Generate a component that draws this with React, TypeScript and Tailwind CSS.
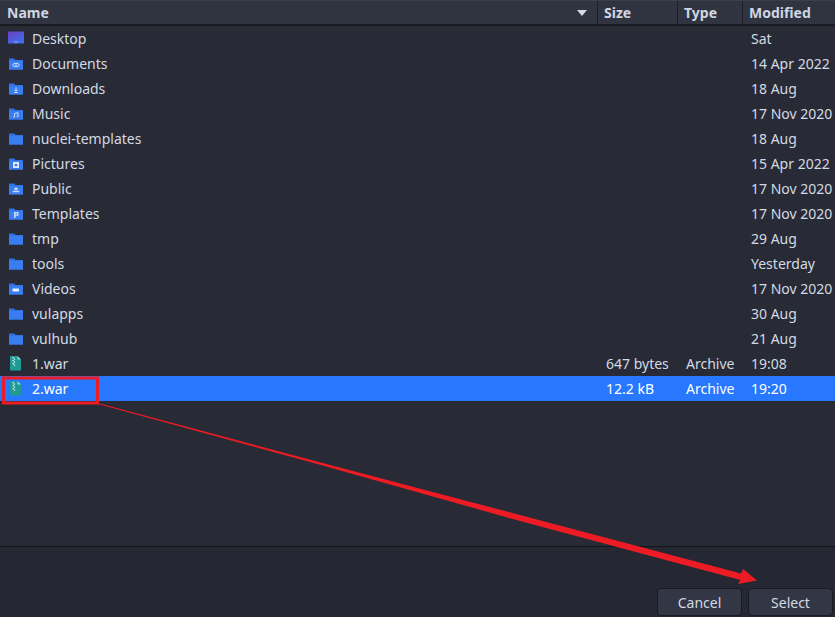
import React from "react";

type Row = { name: string; icon: string; size?: string; type?: string; mod: string; sel?: boolean };

const rows: Row[] = [
  { name: "Desktop", icon: "desktop", mod: "Sat" },
  { name: "Documents", icon: "doc", mod: "14 Apr 2022" },
  { name: "Downloads", icon: "down", mod: "18 Aug" },
  { name: "Music", icon: "music", mod: "17 Nov 2020" },
  { name: "nuclei-templates", icon: "plain", mod: "18 Aug" },
  { name: "Pictures", icon: "pic", mod: "15 Apr 2022" },
  { name: "Public", icon: "pub", mod: "17 Nov 2020" },
  { name: "Templates", icon: "tpl", mod: "17 Nov 2020" },
  { name: "tmp", icon: "plain", mod: "29 Aug" },
  { name: "tools", icon: "plain", mod: "Yesterday" },
  { name: "Videos", icon: "vid", mod: "17 Nov 2020" },
  { name: "vulapps", icon: "plain", mod: "30 Aug" },
  { name: "vulhub", icon: "plain", mod: "21 Aug" },
  { name: "1.war", icon: "zip", size: "647 bytes", type: "Archive", mod: "19:08" },
  { name: "2.war", icon: "zip", size: "12.2 kB", type: "Archive", mod: "19:20", sel: true },
];

function Glyph({ kind }: { kind: string }) {
  const c = "#c9dcff";
  switch (kind) {
    case "doc":
      return (
        <>
          <ellipse cx="8" cy="9" rx="3.2" ry="1.7" fill="none" stroke={c} strokeWidth="1" />
          <circle cx="8" cy="9" r="0.8" fill={c} />
        </>
      );
    case "down":
      return <path d="M8 6.5v3.5M6.3 8.7L8 10.4l1.7-1.7M6 11.5h4" fill="none" stroke={c} strokeWidth="1" />;
    case "music":
      return <path d="M6.5 11V7.5l3.5-.8V10.5M6.5 11h-1.2M10 10.5H8.8" fill="none" stroke={c} strokeWidth="1" />;
    case "pic":
      return (
        <>
          <rect x="5" y="6" width="6" height="6" fill="#dbe7ff" />
          <rect x="6.8" y="8" width="2.4" height="2.2" fill="#3a74e0" />
        </>
      );
    case "pub":
      return <path d="M6.5 6.8h3v2.2h-3zM4.8 9.8h6.4v1.4H4.8z" fill={c} />;
    case "tpl":
      return <path d="M6 6h4.5v3.8H7.5V12H6zM7.5 7.2v1.4H9V7.2z" fill={c} fillRule="evenodd" />;
    case "vid":
      return <rect x="4.5" y="7.5" width="6.5" height="3" rx="0.7" fill="#e6eeff" />;
    default:
      return null;
  }
}

function FileIcon({ kind }: { kind: string }) {
  if (kind === "desktop") {
    return (
      <svg width="16" height="16" viewBox="0 0 16 16" className="shrink-0">
        <defs>
          <linearGradient id="dg" x1="0" y1="0" x2="0.6" y2="1">
            <stop offset="0" stopColor="#6b3fbf" />
            <stop offset="1" stopColor="#3f6fea" />
          </linearGradient>
        </defs>
        <rect x="0" y="0.5" width="16" height="12" fill="url(#dg)" rx="0.5" />
        <rect x="6.5" y="10.5" width="1" height="1" fill="#d8e0ff" />
        <rect x="8.5" y="10.5" width="1" height="1" fill="#d8e0ff" />
      </svg>
    );
  }
  if (kind === "zip") {
    return (
      <svg width="16" height="16" viewBox="0 0 16 16" className="shrink-0">
        <path d="M2 0h7.5L13 3.5V14.5H2z" fill="#1f9a94" />
        <path d="M9.5 0L13 3.5H9.5z" fill="#8fdcd3" />
        <path d="M4.5 1h1.3v1.3H4.5zM5.8 2.5h1.3v1.3H5.8zM4.5 4h1.3v1.3H4.5zM5.8 5.5h1.3v1.3H5.8zM4.5 7h1.3v1.3H4.5zM5.8 8.5h1.3v1.3H5.8z" fill="#e2f7f3" />
      </svg>
    );
  }
  return (
    <svg width="16" height="16" viewBox="0 0 16 16" className="shrink-0">
      <path d="M1 2.5h5.2l1.3 1.5H15v9.5H1z" fill="#2f73e6" />
      <path d="M1 5h14v8.5H1z" fill="#3a7df0" />
      <Glyph kind={kind} />
    </svg>
  );
}

function Head({ label, className }: { label: string; className: string }) {
  return (
    <div className={`flex items-center px-[6px] h-full border-r border-[#1c1e26] font-bold text-[#cfd6e1] ${className}`}>
      {label}
    </div>
  );
}

export default function App() {
  return (
    <div
      className="relative w-[835px] h-[617px] overflow-hidden flex flex-col bg-[#282a36] text-[14px] text-[#d3dae3]"
      style={{ fontFamily: '"Noto Sans", "Open Sans", sans-serif' }}
    >
      <div className="h-[26px] flex shrink-0 bg-[#303340] border-b-2 border-[#191b22] border-t border-t-[#3a3d4a]">
        <div className="w-[598px] flex items-center justify-between pl-[7px] pr-[10px] h-full border-r border-[#1c1e26] font-bold text-[#cfd6e1]">
          <span>Name</span>
          <svg width="10" height="6" viewBox="0 0 10 6" className="mt-px">
            <path d="M0 0h10L5 6z" fill="#d3dae3" />
          </svg>
        </div>
        <Head label="Size" className="w-[80px]" />
        <Head label="Type" className="w-[65px]" />
        <Head label="Modified" className="flex-1 border-r-0" />
      </div>

      <div className="flex-1 flex flex-col">
        {rows.map((r) => (
          <div key={r.name} className={`h-[25px] flex items-center shrink-0 ${r.sel ? "bg-[#2777ff] text-white" : ""}`}>
            <div className="w-[598px] flex items-center pl-[8px] gap-[8px]">
              <FileIcon kind={r.icon} />
              <span>{r.name}</span>
            </div>
            <div className="w-[80px] pl-[8px]">{r.size}</div>
            <div className="w-[65px] pl-[8px]">{r.type}</div>
            <div className="flex-1 pl-[8px] whitespace-nowrap">{r.mod}</div>
          </div>
        ))}
      </div>

      <div className="h-[71px] shrink-0 bg-[#252833] border-t border-[#14151b] flex items-end justify-end gap-[6px] pr-[2px] pb-px">
        <button className="w-[85px] h-[28px] rounded-[4px] border border-[#191b22] bg-[#333644] text-[#d3dae3]">Cancel</button>
        <button className="w-[85px] h-[28px] rounded-[4px] border border-[#191b22] bg-[#333644] text-[#d3dae3]">Select</button>
      </div>

      <svg className="absolute inset-0 pointer-events-none" width="835" height="617" viewBox="0 0 835 617">
        <rect x="3.5" y="378" width="94" height="25" fill="none" stroke="#ed1c24" strokeWidth="3" />
        <path d="M98 403 L300 457 L520 515 L741 573.5 L743 569 L757 580.5 L738 584 L740.5 580 L520 521 L310 462 L98 404 Z" fill="#ed1c24" />
      </svg>
    </div>
  );
}
